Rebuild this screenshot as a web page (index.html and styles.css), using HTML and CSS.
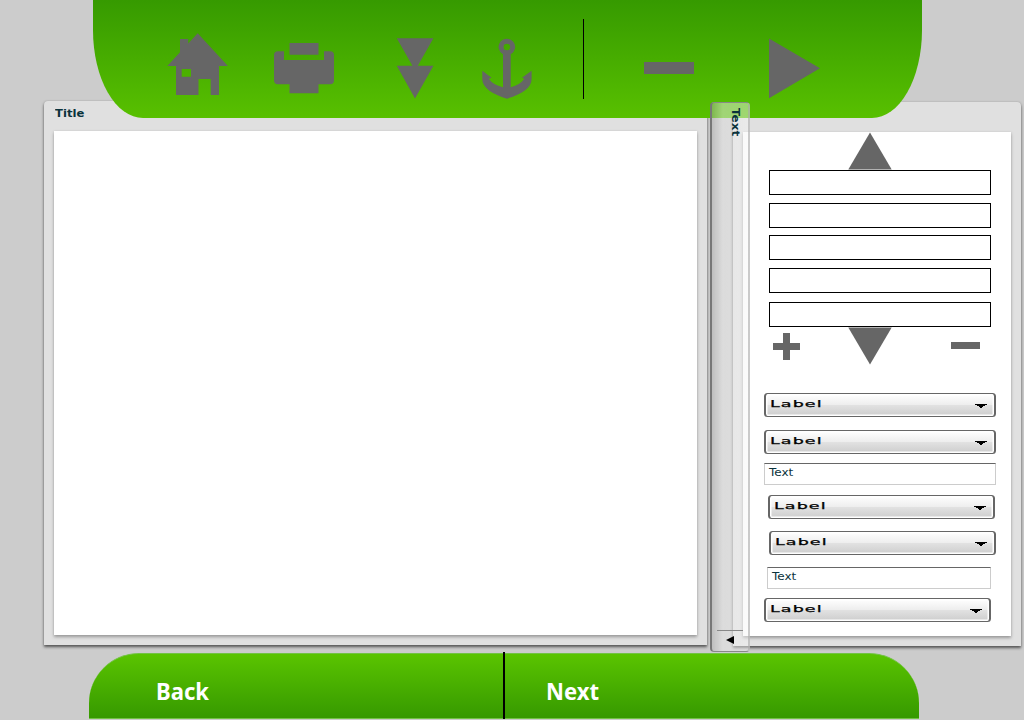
FILE: index.html
```
<!DOCTYPE html>
<html lang="en">
<head>
<meta charset="utf-8">
<title>Title</title>
<link rel="stylesheet" href="styles.css">
</head>
<body>
<header class="toolbar">
  <svg class="icon home" width="62" height="64" viewBox="167 32 62 64"><path fill-rule="evenodd" d="M197.7 33.3L227.9 66H219V95H210.7V79H198.5V95H176V66H167.3L180 52.3V39H188.2V43.4ZM181.7 69V76.7H191V69Z"/></svg>
  <svg class="icon printer" width="60" height="52" viewBox="274 42 60 52"><path d="M289.5 43H318.5V54.7H289.5ZM278 51.3H284V60H324V51.3H330Q334 51.3 334 55.3V80.3Q334 84.3 330 84.3H318.5V93.3H289.5V84.3H278Q274 84.3 274 80.3V55.3Q274 51.3 278 51.3Z"/></svg>
  <svg class="icon double-down" width="38" height="62" viewBox="396 38 38 62"><path d="M396.8 38.3H433.4L417.8 65.8H433.4L415 98.5L396.8 65.8H412.4Z"/></svg>
  <svg class="icon anchor" width="52" height="62" viewBox="481 38 52 62"><path fill-rule="evenodd" d="M503 54.3A8.3 8.3 0 1 1 510.7 54.3V87.3Q520 85 524.3 78.8L522 77.7L531.6 70.7V79.3C531.6 88 521 94.5 506.9 98.7C493 94.5 482.3 88 482.3 79.3V70.7L491.5 77.7L488.8 78.8Q493 85 503 87.3ZM506.9 43.7A3.3 3.3 0 1 0 506.9 50.3A3.3 3.3 0 1 0 506.9 43.7Z"/></svg>
  <span class="divider"></span>
  <span class="dash"></span>
  <svg class="icon play" width="52" height="61" viewBox="769 38 52 61"><path d="M769 38.5L820 68.3L769 98.3Z"/></svg>
</header>

<main class="workspace">
  <section class="panel document">
    <h1 class="title"><span>Title</span></h1>
    <div class="page"></div>
  </section>

  <section class="panel properties">
    <div class="page form">
      <svg class="icon scroll-up" width="44" height="38" viewBox="0 0 44 38"><path d="M22 .5L43.7 37.5H.3Z"/></svg>
      <div class="list">
        <div class="field"></div>
        <div class="field"></div>
        <div class="field"></div>
        <div class="field"></div>
        <div class="field"></div>
      </div>
      <div class="controls">
        <svg class="icon plus" width="27" height="27" viewBox="0 0 27 27"><path d="M10 0H17V10H27V17H17V27H10V17H0V10H10Z"/></svg>
        <svg class="icon scroll-down" width="44" height="38" viewBox="0 0 44 38"><path d="M.3 .5H43.7L22 37.5Z"/></svg>
        <span class="minus"></span>
      </div>
      <div class="select first"><span class="label">Label</span><svg class="caret" width="12" height="4" viewBox="0 0 12 4"><path d="M0 0H12V1H10V2H8V3H7V4H5V3H4V2H2V1H0Z"/></svg></div>
      <div class="select second"><span class="label">Label</span><svg class="caret" width="12" height="4" viewBox="0 0 12 4"><path d="M0 0H12V1H10V2H8V3H7V4H5V3H4V2H2V1H0Z"/></svg></div>
      <div class="input upper"><span>Text</span></div>
      <div class="select third"><span class="label">Label</span><svg class="caret" width="12" height="4" viewBox="0 0 12 4"><path d="M0 0H12V1H10V2H8V3H7V4H5V3H4V2H2V1H0Z"/></svg></div>
      <div class="select fourth"><span class="label">Label</span><svg class="caret" width="12" height="4" viewBox="0 0 12 4"><path d="M0 0H12V1H10V2H8V3H7V4H5V3H4V2H2V1H0Z"/></svg></div>
      <div class="input lower"><span>Text</span></div>
      <div class="select fifth"><span class="label">Label</span><svg class="caret" width="12" height="4" viewBox="0 0 12 4"><path d="M0 0H12V1H10V2H8V3H7V4H5V3H4V2H2V1H0Z"/></svg></div>
    </div>
  </section>
</main>

<aside class="drawer">
  <span class="drawer-text">Text</span>
  <div class="drawer-foot"><svg width="8" height="8" viewBox="0 0 8 8"><path d="M8 0V8L0 4Z"/></svg></div>
</aside>

<footer class="nav">
  <div class="nav-item back"><span>Back</span></div>
  <span class="nav-divider"></span>
  <div class="nav-item next"><span>Next</span></div>
</footer>
</body>
</html>
```
FILE: styles.css
```
* { box-sizing: border-box; }

body {
  margin: 0;
  width: 1024px;
  height: 720px;
  overflow: hidden;
  position: relative;
  background: #ccc;
  font-family: "DejaVu Sans", Verdana, sans-serif;
  font-size: 10px;
  color: #0b333c;
}

svg { display: block; flex: none; }
.icon { fill: #666; }

.toolbar {
  position: relative;
  z-index: 2;
  display: flex;
  align-items: flex-start;
  width: 829px;
  height: 118px;
  margin-left: 93px;
  background: linear-gradient(#369a00, #58c000);
  border-radius: 0 0 50px 50px / 0 0 88px 88px;
}

.home { margin: 32px 0 0 74px; }
.printer { margin: 42px 0 0 45px; }
.double-down { margin: 38px 0 0 62px; }
.anchor { margin: 38px 0 0 47px; }
.divider { width: 1px; height: 80px; margin: 19px 0 0 50px; background: #000; }
.dash { width: 50px; height: 12px; margin: 62px 0 0 60px; background: #666; }
.play { margin: 38px 0 0 75px; }

.workspace {
  display: flex;
  align-items: flex-start;
  height: 552px;
  margin-top: -17px;
  padding-left: 44px;
}

.panel {
  flex: none;
  height: 544px;
  padding: 0 10px;
  background: #e0e0e0;
  border-radius: 4px 4px 0 0;
  box-shadow: 0 2px 3px #555, 0 0 2px #aaa;
}

.document { width: 663px; }
.properties { width: 288px; margin: 1px 0 0 26px; padding-top: 30px; }

.title {
  height: 30px;
  margin: 0;
  padding: 6px 0 0 1px;
  font-size: 10px;
  line-height: 13px;
  font-weight: bold;
}

.title span,
.input span {
  display: inline-block;
  transform: scaleX(1.16);
  transform-origin: 0 0;
}

.page {
  height: 504px;
  background: #fff;
  box-shadow: 0 2px 3px #999, 0 0 2px #ccc;
}

.form {
  display: flex;
  flex-direction: column;
  align-items: flex-start;
}

.scroll-up { margin-left: 105px; }
.list { width: 222px; margin-left: 26px; }
.field { height: 25px; margin-bottom: 8px; border: 1px solid #000; }
.field:nth-child(2) { margin-bottom: 7px; }
.field:nth-child(4) { margin-bottom: 9px; }
.field:last-child { margin-bottom: 0; }

.controls { display: flex; align-items: flex-start; height: 66px; margin-left: 30px; }
.plus { margin-top: 6px; }
.scroll-down { margin-left: 48px; }
.minus { width: 29px; height: 7px; margin: 15px 0 0 59px; background: #666; }

.select {
  display: flex;
  justify-content: space-between;
  flex: none;
  width: 232px;
  height: 24px;
  margin-left: 21px;
  padding: 3px 7px 0 4px;
  border: 2px solid #666;
  border-width: 1.5px 2px;
  border-radius: 3.5px;
  background: linear-gradient(#fff, #eee 48%, #e2e2e2 50%, #cdcdcd);
  box-shadow: inset 0 0 0 1.5px #fff;
  color: #000;
}

.label {
  font-size: 9.5px;
  line-height: 13px;
  letter-spacing: .6px;
  -webkit-text-stroke: .25px #000;
  transform: scaleX(1.84);
  transform-origin: 0 0;
}

.caret { margin-top: 7px; }
.second { margin-top: 13px; }
.third { width: 227px; margin: 10px 0 0 24.5px; }
.fourth { width: 227px; margin: 12px 0 0 26px; }
.fifth { width: 227px; margin-top: 9px; }

.input {
  flex: none;
  width: 232px;
  height: 22px;
  margin: 9px 0 0 21px;
  padding: 2px 4px;
  border: 1px solid #ccc;
  border-top-color: #666;
  line-height: 13px;
}

.input span { transform: scaleX(1.2); }
.lower { width: 224px; margin: 12px 0 0 24px; }

/* Translucent handle lying over the header and both panels */
.drawer {
  position: absolute;
  z-index: 3;
  left: 710px;
  top: 102px;
  width: 40px;
  height: 550px;
  border: 2px solid rgba(190, 190, 190, .6);
  border-left-color: #777;
  border-top: 1.5px solid #888;
  border-bottom: 1px solid #888;
  border-radius: 4px;
  background: linear-gradient(90deg, rgba(175, 175, 175, .45), rgba(235, 235, 235, .5) 30%, rgba(245, 245, 245, .45));
  display: flex;
  flex-direction: column;
  align-items: flex-start;
  justify-content: space-between;
}

.drawer-text {
  margin: 5px 0 0 17px;
  writing-mode: vertical-rl;
  line-height: 13px;
  font-weight: bold;
  transform: scaleY(1.2);
  transform-origin: 0 0;
}

.drawer-foot {
  width: 26px;
  height: 21px;
  margin-left: 5px;
  padding: 5px 0 0 9px;
  border-top: 1px solid #888;
}

.nav {
  display: flex;
  width: 830px;
  height: 66px;
  margin-left: 89px;
  background: linear-gradient(#5ac400, #369900);
  border: 1px solid #72c344;
  border-width: 1px 0;
  border-radius: 50px 50px 0 0;
}

.nav-item {
  font: bold 23px/34px "Noto Sans", sans-serif;
  color: #fff;
}

.nav-item span { display: inline-block; transform-origin: 0 0; transform: scaleX(.96); }
.back { width: 414px; padding: 20px 0 0 67px; }
.next { padding: 20px 0 0 41px; }
.nav-divider { width: 2px; height: 67px; margin-top: -2px; background: #000; }
```
